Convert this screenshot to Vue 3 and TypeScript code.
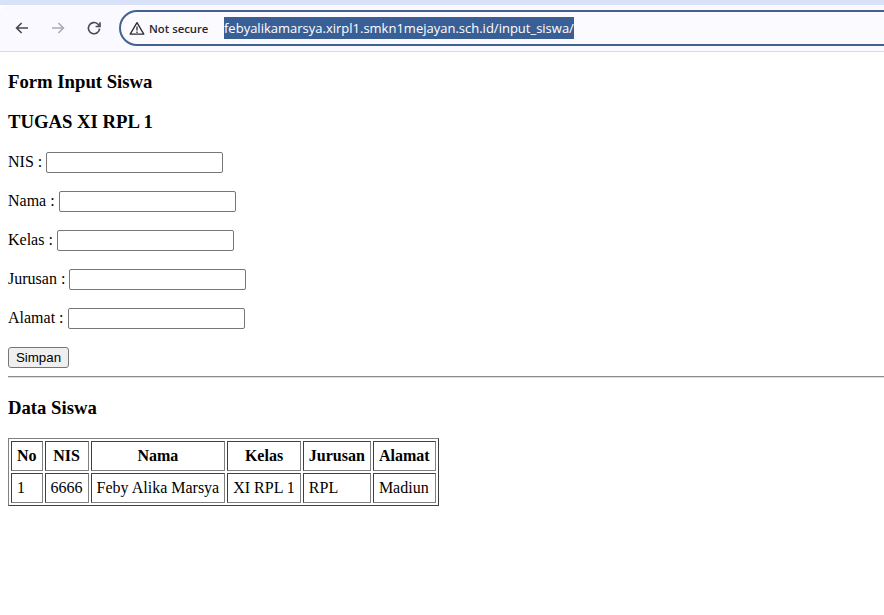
<script setup lang="ts">
interface Student { no: number; nis: string; nama: string; kelas: string; jurusan: string; alamat: string }
const fields: string[] = ['NIS', 'Nama', 'Kelas', 'Jurusan', 'Alamat']
const headers: string[] = ['No', 'NIS', 'Nama', 'Kelas', 'Jurusan', 'Alamat']
const students: Student[] = [
  { no: 1, nis: '6666', nama: 'Feby Alika Marsya', kelas: 'XI RPL 1', jurusan: 'RPL', alamat: 'Madiun' },
]
</script>

<template>
  <div class="browser">
    <header class="chrome">
      <div class="tabstrip"></div>
      <div class="toolbar">
        <button class="nav" aria-label="Back">
          <svg width="16" height="16" viewBox="0 0 16 16" fill="none" stroke="#45494f" stroke-width="1.6"><path d="M14 8H2.8M7.6 3 2.6 8l5 5" /></svg>
        </button>
        <button class="nav" aria-label="Forward">
          <svg width="16" height="16" viewBox="0 0 16 16" fill="none" stroke="#a9acb3" stroke-width="1.6"><path d="M2 8h11.2M8.4 3l5 5-5 5" /></svg>
        </button>
        <button class="nav" aria-label="Reload">
          <svg width="16" height="16" viewBox="0 0 16 16" fill="none" stroke="#45494f" stroke-width="1.6"><path d="M13.6 8.6A5.6 5.6 0 1 1 11.8 4L13.4 5.8" /><path d="M14 2.2v4.3H9.6" /></svg>
        </button>
        <div class="omnibox">
          <svg class="warn" width="16" height="15" viewBox="0 0 16 15" fill="none" stroke="#2a2c30" stroke-width="1.3"><path d="M8 1.6 14.8 13.2H1.2Z" stroke-linejoin="round" /><path d="M8 5.4v4.2M8 10.6v1.4" /></svg>
          <span class="secure">Not secure</span>
          <span class="url">febyalikamarsya.xirpl1.smkn1mejayan.sch.id/input_siswa/</span>
        </div>
      </div>
    </header>
    <main class="page">
      <h3>Form Input Siswa</h3>
      <h3>TUGAS XI RPL 1</h3>
      <form @submit.prevent>
        <p v-for="field in fields" :key="field" class="row">
          {{ field }} : <input type="text" class="field" />
        </p>
        <button type="submit" class="save">Simpan</button>
      </form>
      <hr />
      <h3>Data Siswa</h3>
      <table>
        <thead>
          <tr><th v-for="h in headers" :key="h">{{ h }}</th></tr>
        </thead>
        <tbody>
          <tr v-for="s in students" :key="s.no">
            <td>{{ s.no }}</td>
            <td>{{ s.nis }}</td>
            <td>{{ s.nama }}</td>
            <td>{{ s.kelas }}</td>
            <td>{{ s.jurusan }}</td>
            <td>{{ s.alamat }}</td>
          </tr>
        </tbody>
      </table>
    </main>
  </div>
</template>

<style scoped>
.browser {
  width: 884px;
  height: 615px;
  overflow: hidden;
  background: #fff;
  color: #000;
  font-family: "Liberation Serif", serif;
  font-size: 16px;
}
.chrome { height: 52px; }
.tabstrip { height: 5px; background: #d9e1f8; }
.toolbar {
  height: 46px;
  display: flex;
  align-items: center;
  padding-left: 14px;
  background: #f9f9ff;
  border-top-left-radius: 8px;
  border-bottom: 1px solid #dcdce0;
}
.nav {
  width: 16px;
  height: 16px;
  padding: 0;
  margin-right: 20px;
  border: 0;
  background: none;
  display: flex;
}
.nav:nth-of-type(3) { margin-right: 17px; }
.omnibox {
  flex: none;
  width: 790px;
  height: 36px;
  box-sizing: border-box;
  border: 2px solid #426390;
  border-radius: 18px;
  background: #fbfaff;
  display: flex;
  align-items: center;
  padding-left: 8px;
  font-family: "Open Sans", sans-serif;
}
.warn { flex: none; }
.secure {
  margin-left: 4px;
  font-size: 11.3px;
  font-weight: 600;
  color: #26282c;
  width: 75px;
  white-space: nowrap;
}
.url {
  background: #3a5f96;
  color: #fff;
  font-size: 13px;
  line-height: 22px;
  white-space: nowrap;
}
.page {
  padding: 0 8px;
  display: flow-root;
}
h3 {
  font-size: 18.72px;
  line-height: 21.5px;
  margin: 18.72px 0;
  font-weight: 700;
}
.row {
  margin: 16px 0;
  height: 23px;
  line-height: 21px;
}
.field {
  width: 177px;
  height: 21px;
  box-sizing: border-box;
  border: 1px solid #767676;
  border-radius: 2px;
  padding: 1px 2px;
  background: #fff;
  vertical-align: baseline;
}
.save {
  display: block;
  width: 61px;
  height: 21px;
  margin-top: 17px;
  box-sizing: border-box;
  padding: 0;
  border: 1px solid #767676;
  border-radius: 3px;
  background: #efefef;
  font-family: "Liberation Sans", Arial, sans-serif;
  font-size: 13.33px;
  color: #000;
}
hr {
  margin: 8px -8px 8px 0;
  height: 2px;
  box-sizing: border-box;
  border: 0;
  border-top: 1px solid #8c8c8c;
  border-bottom: 1px solid #dedede;
}
table {
  margin-top: 20px;
  border: 1px solid;
  border-color: #808080 #404040 #404040 #808080;
  border-spacing: 2px;
  border-collapse: separate;
}
th, td {
  border: 1px solid;
  border-color: #404040 #808080 #808080 #404040;
  padding: 5px;
  line-height: 18px;
}
th { font-weight: 700; text-align: center; }
td { text-align: left; }
</style>

<style>
html, body { margin: 0; background: #fff; }
</style>
